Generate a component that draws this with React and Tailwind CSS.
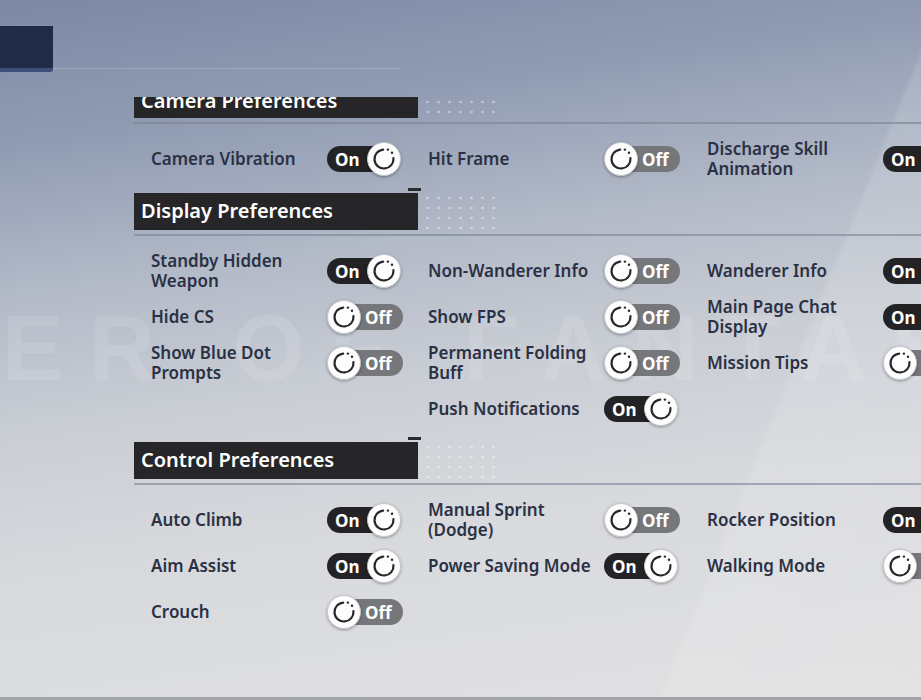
import React from "react";

const sections = [
  {
    title: "Camera Preferences",
    clipped: true,
    rows: [
      [
        { label: "Camera Vibration", on: true },
        { label: "Hit Frame", on: false },
        { label: "Discharge Skill Animation", on: true },
      ],
    ],
  },
  {
    title: "Display Preferences",
    rows: [
      [
        { label: "Standby Hidden Weapon", on: true },
        { label: "Non-Wanderer Info", on: false },
        { label: "Wanderer Info", on: true },
      ],
      [
        { label: "Hide CS", on: false },
        { label: "Show FPS", on: false },
        { label: "Main Page Chat Display", on: true },
      ],
      [
        { label: "Show Blue Dot Prompts", on: false },
        { label: "Permanent Folding Buff", on: false },
        { label: "Mission Tips", on: false },
      ],
      [null, { label: "Push Notifications", on: true }, null],
    ],
  },
  {
    title: "Control Preferences",
    rows: [
      [
        { label: "Auto Climb", on: true },
        { label: "Manual Sprint (Dodge)", on: false },
        { label: "Rocker Position", on: true },
      ],
      [
        { label: "Aim Assist", on: true },
        { label: "Power Saving Mode", on: true },
        { label: "Walking Mode", on: false },
      ],
      [{ label: "Crouch", on: false }, null, null],
    ],
  },
];

function Knob() {
  return (
    <div className="relative z-10 rounded-full shadow-[0_1px_3px_rgba(0,0,0,0.35)]">
      <svg width="34" height="34" viewBox="0 0 34 34" className="block">
        <circle cx="17" cy="17" r="16.5" fill="#fdfdfd" stroke="#c4c6cb" strokeWidth="1" />
        <path
          d="M16.17 7.54 A9.5 9.5 0 1 0 26.46 16.17"
          fill="none"
          stroke="#26272b"
          strokeWidth="2.2"
          strokeLinecap="round"
        />
        <circle cx="20.9" cy="7.6" r="1.2" fill="#26272b" />
        <circle cx="25" cy="10.8" r="1.2" fill="#26272b" />
      </svg>
    </div>
  );
}

function Toggle({ on }) {
  if (on) {
    return (
      <div className="flex items-center shrink-0">
        <div className="h-[26px] w-[62px] rounded-full bg-[#232326] pl-[8px] flex items-center text-white font-bold text-[17px] leading-none">
          On
        </div>
        <div className="-ml-[22px]">
          <Knob />
        </div>
      </div>
    );
  }
  return (
    <div className="flex items-center shrink-0">
      <Knob />
      <div className="-ml-[18px] h-[26px] w-[60px] rounded-full bg-[#76777a] pl-[22px] flex items-center text-white font-bold text-[17px] leading-none">
        Off
      </div>
    </div>
  );
}

function Section({ title, rows, clipped }) {
  return (
    <div>
      {!clipped && <div className="ml-[274px] w-[13px] h-[3px] bg-[#2a2b2e]" />}
      <div className={`flex items-stretch ${clipped ? "" : "mt-[2px]"}`}>
        <div
          className={`w-[284px] bg-[#262628] text-white text-[20px] font-semibold pl-[7px] overflow-hidden ${
            clipped ? "h-[21px]" : "h-[37px]"
          }`}
        >
          <div className={clipped ? "-mt-[14px] leading-[36px]" : "leading-[36px]"}>{title}</div>
        </div>
        <div className="ml-[4px] w-[76px] bg-[radial-gradient(circle,rgba(255,255,255,0.4)_1px,transparent_1.6px)] bg-[length:11px_10px]" />
      </div>
      <div className="mt-[4px] h-[2px] bg-[#7a8292]/60" />
      <div className="pl-[17px] pt-[12px] grid grid-cols-[277px_279px_279px] auto-rows-[46px]">
        {rows.flat().map((item, i) =>
          item ? (
            <div key={i} className="flex items-center">
              <div className="w-[176px] pr-[2px] text-[17px] leading-[20px] font-semibold text-[#2b3144]">
                {item.label}
              </div>
              <Toggle on={item.on} />
            </div>
          ) : (
            <div key={i} />
          )
        )}
      </div>
    </div>
  );
}

export default function App() {
  return (
    <div className="relative w-[921px] h-[700px] overflow-hidden flex flex-col font-['Noto_Sans',sans-serif] bg-[linear-gradient(172deg,#7c89a5_0%,#919cb3_18%,#b3bac8_36%,#c9cdd4_52%,#d7d9dd_70%,#e1e1e2_100%)]">
      {/* background decoration */}
      <div className="absolute inset-0 bg-[linear-gradient(112deg,transparent_0%,transparent_78%,rgba(255,255,255,0.12)_78.5%,rgba(255,255,255,0.08)_100%)]" />
      <div className="absolute top-[302px] left-[2px] text-[92px] leading-none font-black font-['Liberation_Sans',sans-serif] text-white/10 tracking-[0.28em] whitespace-nowrap">
        ER OF FANTASY
      </div>

      <div className="relative z-10 flex flex-col flex-1">
        <div className="mt-[26px] flex items-end">
          <div className="w-[53px] h-[46px] bg-[#1f2b47] border-b-[4px] border-[#3c4f78] rounded-br-[3px]" />
          <div className="w-[347px] h-px mb-[3px] bg-[#a8b1c3]/70" />
        </div>

        <div className="mt-[25px] pl-[134px] flex flex-col">
          <Section {...sections[0]} />
          <div className="mt-[6px]">
            <Section {...sections[1]} />
          </div>
          <div className="mt-[5px]">
            <Section {...sections[2]} />
          </div>
        </div>

        <div className="mt-auto h-[3px] bg-[#a3a4a7]" />
      </div>
    </div>
  );
}
